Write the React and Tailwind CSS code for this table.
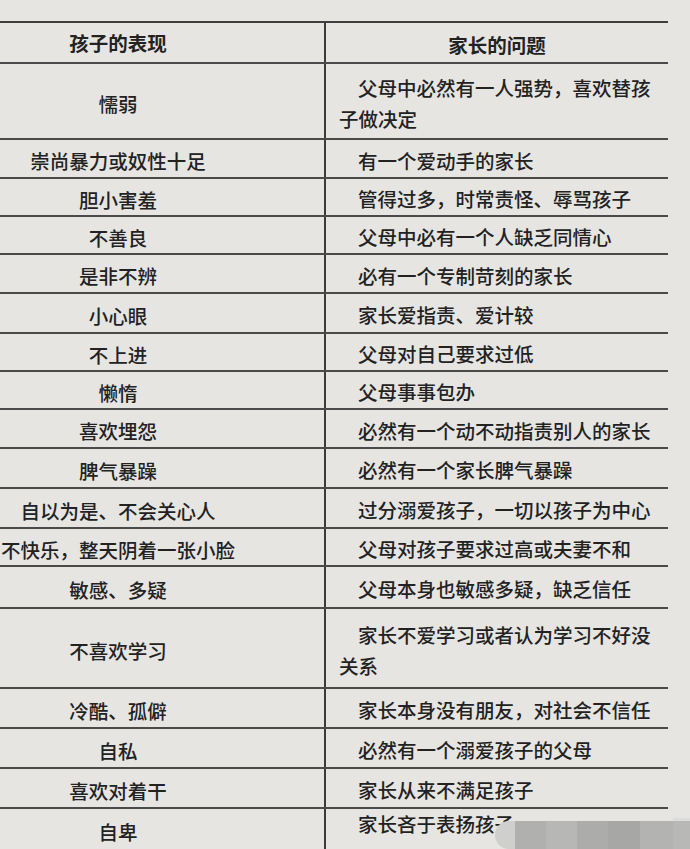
const rows = [
  { kid: "懦弱", parent: ["父母中必然有一人强势，喜欢替孩", "子做决定"], h: "h-[76px]" },
  { kid: "崇尚暴力或奴性十足", parent: ["有一个爱动手的家长"], h: "h-[39px]" },
  { kid: "胆小害羞", parent: ["管得过多，时常责怪、辱骂孩子"], h: "h-[38px]" },
  { kid: "不善良", parent: ["父母中必有一个人缺乏同情心"], h: "h-[38px]" },
  { kid: "是非不辨", parent: ["必有一个专制苛刻的家长"], h: "h-[39px]" },
  { kid: "小心眼", parent: ["家长爱指责、爱计较"], h: "h-[40px]" },
  { kid: "不上进", parent: ["父母对自己要求过低"], h: "h-[38px]" },
  { kid: "懒惰", parent: ["父母事事包办"], h: "h-[38px]" },
  { kid: "喜欢埋怨", parent: ["必然有一个动不动指责别人的家长"], h: "h-[39px]" },
  { kid: "脾气暴躁", parent: ["必然有一个家长脾气暴躁"], h: "h-[40px]" },
  { kid: "自以为是、不会关心人", parent: ["过分溺爱孩子，一切以孩子为中心"], h: "h-[40px]" },
  { kid: "不快乐，整天阴着一张小脸", parent: ["父母对孩子要求过高或夫妻不和"], h: "h-[38px]" },
  { kid: "敏感、多疑", parent: ["父母本身也敏感多疑，缺乏信任"], h: "h-[42px]" },
  { kid: "不喜欢学习", parent: ["家长不爱学习或者认为学习不好没", "关系"], h: "h-[80px]" },
  { kid: "冷酷、孤僻", parent: ["家长本身没有朋友，对社会不信任"], h: "h-[40px]" },
  { kid: "自私", parent: ["必然有一个溺爱孩子的父母"], h: "h-[40px]" },
  { kid: "喜欢对着干", parent: ["家长从来不满足孩子"], h: "h-[40px]" },
  { kid: "自卑", parent: ["家长吝于表扬孩子"], h: "h-[42px]", rp: "pt-0 pb-[12px]" },
];

function Row({ kid, parent, h, rp = "pt-[3px]" }) {
  return (
    <div className={`flex ${h} border-b-2 border-[#4a4a4a]`}>
      <div className="w-[326px] shrink-0 border-r-2 border-[#3a3a3a] pr-[88px] pt-[5px] flex items-center justify-center whitespace-nowrap">
        {kid}
      </div>
      <div className={`flex-1 pl-[13px] ${rp} flex flex-col justify-center leading-[31px]`}>
        {parent.map((line, i) => (
          <div key={i} className={`whitespace-nowrap ${i === 0 ? "pl-[19px]" : ""}`}>
            {line}
          </div>
        ))}
      </div>
    </div>
  );
}

export default function App() {
  return (
    <div
      className="relative w-[690px] h-[849px] overflow-hidden bg-[#e6e5e2] text-[#222222] text-[19.5px] font-medium pt-[21px]"
      style={{ fontFamily: '"Noto Sans CJK SC", sans-serif' }}
    >
      <div className="w-[668px] border-t-2 border-[#3f3f3f]">
        <div className="flex h-[41px] border-b-2 border-[#4a4a4a] font-bold">
          <div className="w-[326px] shrink-0 border-r-2 border-[#3a3a3a] pr-[88px] flex items-center justify-center">
            孩子的表现
          </div>
          <div className="flex-1 flex items-center justify-center pt-[4px]">家长的问题</div>
        </div>
        {rows.map((r, i) => (
          <Row key={i} {...r} />
        ))}
      </div>

      {/* watermark mosaic */}
      <div className="absolute left-[495px] top-[821px] flex h-[28px] w-[195px] items-stretch">
        <div className="w-[20px] rounded-l-full bg-[#cfcfcd]" />
        <div className="w-[31px] bg-[#b0b0ae]" />
        <div className="w-[31px] bg-[#b7b7b5]" />
        <div className="w-[31px] bg-[#acacaa]" />
        <div className="w-[32px] bg-[#a7a7a5]" />
        <div className="w-[33px] bg-[#b3b4b2]" />
        <div className="flex-1 -mt-[3px] bg-[#b8b8b6] border-t-[3px] border-[#dcdcda]" />
      </div>
    </div>
  );
}
